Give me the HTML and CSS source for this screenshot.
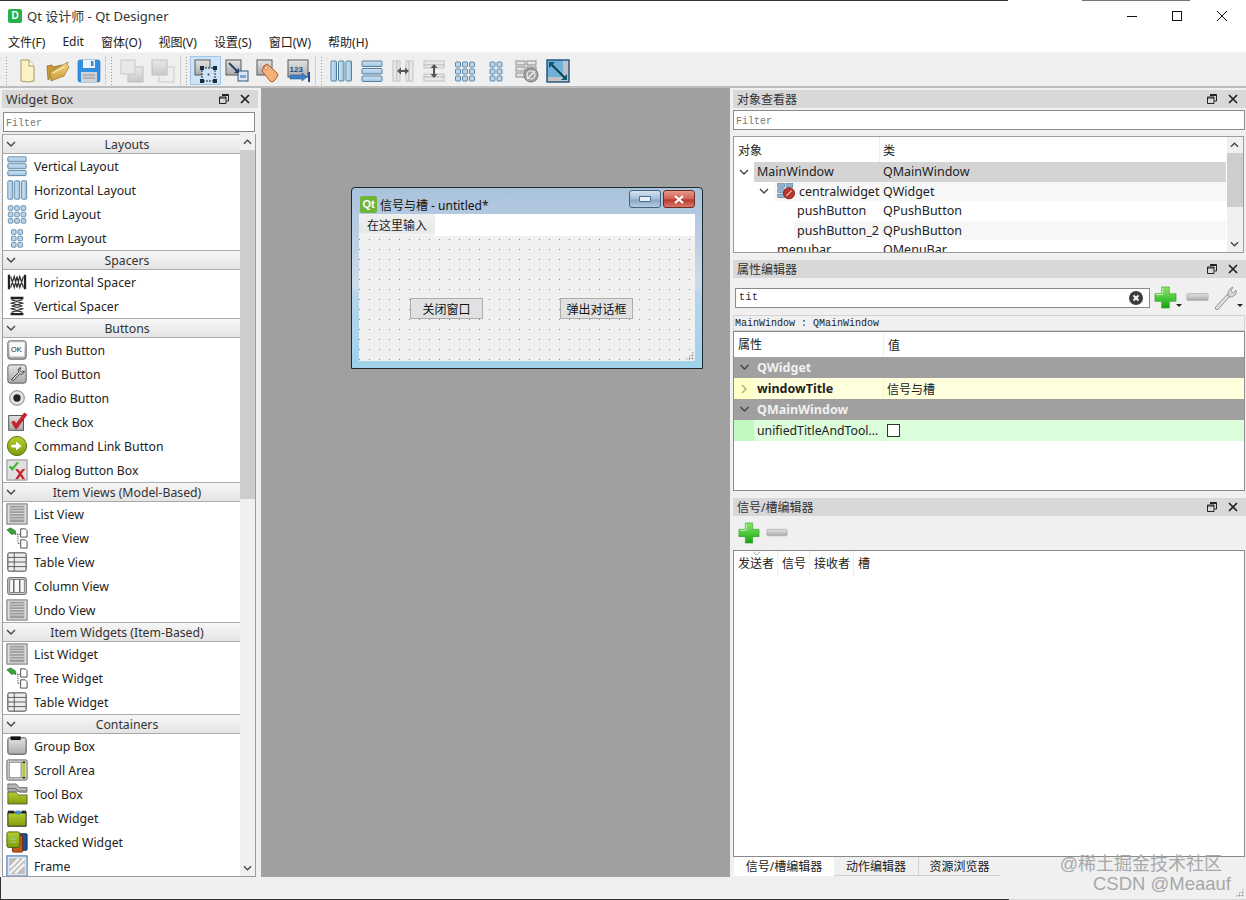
FILE: index.html
```html
<!DOCTYPE html>
<html lang="zh-CN">
<head>
    <meta charset="UTF-8">
    <title>Qt 设计师 - Qt Designer</title>
    <link rel="stylesheet" href="styles.css">
</head>
<body>
<svg class="defs" xmlns="http://www.w3.org/2000/svg">
    <defs>
        <linearGradient id="gBlue" x1="0" y1="0" x2="0" y2="1"><stop offset="0" stop-color="#d4e6f5"/><stop offset="1" stop-color="#9cc2e2"/></linearGradient>
        <linearGradient id="gBlueH" x1="0" y1="0" x2="1" y2="0"><stop offset="0" stop-color="#d4e6f5"/><stop offset="1" stop-color="#9cc2e2"/></linearGradient>
        <linearGradient id="gGray" x1="0" y1="0" x2="0" y2="1"><stop offset="0" stop-color="#e4e4e4"/><stop offset="1" stop-color="#aaa"/></linearGradient>
        <linearGradient id="gGreen" x1="0" y1="0" x2="0" y2="1"><stop offset="0" stop-color="#8be86a"/><stop offset="1" stop-color="#12a80f"/></linearGradient>
        <linearGradient id="gFolder" x1="0" y1="0" x2="0" y2="1"><stop offset="0" stop-color="#f6dc8c"/><stop offset="1" stop-color="#c99a35"/></linearGradient>
        <linearGradient id="gOlive" x1="0" y1="0" x2="0" y2="1"><stop offset="0" stop-color="#b5cf2e"/><stop offset="1" stop-color="#7f9c0e"/></linearGradient>
    </defs>
    <symbol id="i-new" viewBox="0 0 24 24"><path d="M6 1h8l5 6v15q-6 2-13 0z" fill="#fbf3c4" stroke="#a99b63"/><path d="M14 1v6h5" fill="#fff" stroke="#a99b63"/></symbol>
    <symbol id="i-open" viewBox="0 0 24 24"><path d="M2 21L1 7l5-1 1 2 9-2 1 3z" fill="#c79a3c" stroke="#8a6a22" stroke-width=".7"/><path d="M4 13L22 3l-1 3 2 2-5 9-13 5z" fill="url(#gFolder)" stroke="#94752c" stroke-width=".7"/><path d="M7 14l11-6" stroke="#fff3c4" fill="none"/></symbol>
    <symbol id="i-save" viewBox="0 0 24 24"><path d="M1 3q0-2 2-2h18q2 0 2 2v18q0 2-2 2H3q-2 0-2-2z" fill="#2f8fe0" stroke="#1c6db5" stroke-width=".6"/><rect x="6" y="1" width="12" height="8" fill="#eef4fa"/><rect x="14" y="2" width="2.500" height="5" fill="#2f8fe0"/><rect x="4" y="13" width="16" height="10" fill="#cfd4d8"/><path d="M6 16h12M6 19h12" stroke="#8b9298"/></symbol>
    <symbol id="i-fwd" viewBox="0 0 24 24" opacity=".55"><rect x="8" y="8" width="15" height="15" fill="url(#gGray)" stroke="#9a9a9a"/><rect x="1" y="1" width="14" height="14" fill="#e3e3e3" stroke="#a8a8a8"/></symbol>
    <symbol id="i-back" viewBox="0 0 24 24" opacity=".55"><rect x="8" y="8" width="15" height="15" fill="#ececec" stroke="#b0b0b0"/><rect x="1" y="1" width="15" height="15" fill="url(#gGray)" stroke="#9a9a9a"/></symbol>
    <symbol id="i-edit" viewBox="0 0 24 24"><rect x="1" y="1" width="15" height="15" fill="url(#gGray)" stroke="#5a5a5a"/><rect x="8" y="9" width="13" height="13" fill="#cfe3f6" stroke="#222" stroke-dasharray="2 1"/><path d="M6 7h4v4H6zM19 7h4v4h-4zM6 20h4v4H6zM19 20h4v4h-4z" fill="#1b2b44"/><circle cx="14.500" cy="15.500" r="1" fill="#345"/></symbol>
    <symbol id="i-signal" viewBox="0 0 24 24"><rect x="1" y="1" width="15" height="15" fill="url(#gGray)" stroke="#5a5a5a"/><rect x="13" y="12" width="10" height="10" fill="#dbe8f4" stroke="#35567a"/><rect x="15" y="16" width="6" height="3" fill="#7fa6cc"/><path d="M4 4l9 9" stroke="#22416a" stroke-width="2"/><path d="M9 14h5v-5z" fill="#22416a"/></symbol>
    <symbol id="i-buddy" viewBox="0 0 24 24"><rect x="1" y="1" width="15" height="15" fill="url(#gGray)" stroke="#5a5a5a"/><path d="M8 7l3-2 10 9q2 2 0 4l-3 4q-2 2-4 0L6 12z" fill="#f3b27a" stroke="#b5561e"/><circle cx="10" cy="9" r="1.500" fill="#fff" stroke="#b5561e" stroke-width=".6"/></symbol>
    <symbol id="i-vlayout" viewBox="0 0 24 24"><g fill="url(#gBlue)" stroke="#55819f"><rect x="2" y="2" width="20" height="5.500" rx="1"/><rect x="2" y="9.500" width="20" height="5.500" rx="1"/><rect x="2" y="17" width="20" height="5.500" rx="1"/></g></symbol>
    <symbol id="i-hlayout" viewBox="0 0 24 24"><g fill="url(#gBlueH)" stroke="#55819f"><rect x="2" y="2" width="5.500" height="20" rx="1"/><rect x="9.500" y="2" width="5.500" height="20" rx="1"/><rect x="17" y="2" width="5.500" height="20" rx="1"/></g></symbol>
    <symbol id="i-grid" viewBox="0 0 24 24"><g fill="#bcd5ea" stroke="#5f88a8"><rect x="2.500" y="3" width="5" height="5" rx="1"/><rect x="9.500" y="3" width="5" height="5" rx="1"/><rect x="16.500" y="3" width="5" height="5" rx="1"/><rect x="2.500" y="10" width="5" height="5" rx="1"/><rect x="9.500" y="10" width="5" height="5" rx="1"/><rect x="16.500" y="10" width="5" height="5" rx="1"/><rect x="2.500" y="17" width="5" height="5" rx="1"/><rect x="9.500" y="17" width="5" height="5" rx="1"/><rect x="16.500" y="17" width="5" height="5" rx="1"/></g></symbol>
    <symbol id="i-form" viewBox="0 0 24 24"><g fill="#bcd5ea" stroke="#5f88a8"><rect x="6" y="3" width="5" height="5" rx="1"/><rect x="13" y="3" width="5" height="5" rx="1"/><rect x="6" y="10" width="5" height="5" rx="1"/><rect x="13" y="10" width="5" height="5" rx="1"/><rect x="6" y="17" width="5" height="5" rx="1"/><rect x="13" y="17" width="5" height="5" rx="1"/></g></symbol>
    <symbol id="i-hsplit" viewBox="0 0 24 24"><g fill="#e8e8e8" stroke="#c2c2c2"><rect x="2" y="2" width="4" height="20"/><rect x="6" y="2" width="3" height="20"/><rect x="15" y="2" width="3" height="20"/><rect x="18" y="2" width="4" height="20"/></g><path d="M6 12l4-3.500v2.500h4V8.500l4 3.500-4 3.500V13h-4v2.500z" fill="#555"/></symbol>
    <symbol id="i-vsplit" viewBox="0 0 24 24"><g fill="#e8e8e8" stroke="#c2c2c2"><rect x="2" y="2" width="20" height="4"/><rect x="2" y="6" width="20" height="3"/><rect x="2" y="15" width="20" height="3"/><rect x="2" y="18" width="20" height="4"/></g><path d="M12 5l3.500 4H13v6h2.500L12 19l-3.500-4H11V9H8.500z" fill="#555"/></symbol>
    <symbol id="i-break" viewBox="0 0 24 24"><g fill="#e4e4e4" stroke="#8e8e8e"><rect x="1" y="2" width="9" height="4"/><rect x="12" y="2" width="9" height="4"/><rect x="1" y="8" width="9" height="4"/><rect x="12" y="8" width="9" height="4"/><rect x="1" y="14" width="9" height="4"/></g><circle cx="16" cy="16" r="7" fill="#a2a2a2" stroke="#777"/><path d="M12 20l8-8" stroke="#eee" stroke-width="1.500"/><circle cx="16" cy="16" r="4" fill="none" stroke="#eee" stroke-width="1.200"/></symbol>
    <symbol id="i-adjust" viewBox="0 0 24 24"><rect x="1" y="1" width="22" height="22" fill="#6fb0d8"/><path d="M17 1h6v22H1v-5h16z" fill="#c2c2c2"/><rect x="1" y="1" width="22" height="22" fill="none" stroke="#1d4f7c" stroke-width="1.400"/><path d="M4 4l16 16" stroke="#0d3d56" stroke-width="2"/><path d="M3 3h6L3 9zM21 21h-6l6-6z" fill="#0d5a6e"/></symbol>
    <symbol id="i-hspacer" viewBox="0 0 24 24"><path d="M2 4h2.500v16H2zM19.500 4H22v16h-2.500z" fill="#222"/><path d="M5 18L9 6l3 12 3-12 4 12M5 6l4 12 3-12 3 12 4-12" fill="none" stroke="#333" stroke-width="1.300"/></symbol>
    <symbol id="i-vspacer" viewBox="0 0 24 24"><path d="M5 2h14v2.500H5zM5 19.500h14V22H5z" fill="#222"/><path d="M18 5L6 9l12 3-12 3 12 4M6 5l12 4-12 3 12 3-12 4" fill="none" stroke="#333" stroke-width="1.300"/></symbol>
    <symbol id="i-tool" viewBox="0 0 24 24"><rect x="2" y="2" width="20" height="20" rx="2.500" fill="url(#gGray)" stroke="#555"/><path d="M6 18l8-8q-2-4 2-5l-1 3 2 2 3-1q-1 4-5 3l-7 7z" fill="#dcdcdc" stroke="#333"/></symbol>
    <symbol id="i-radio" viewBox="0 0 24 24"><circle cx="12" cy="12" r="8" fill="#e2e2e2" stroke="#777"/><circle cx="12" cy="12" r="4" fill="#222"/></symbol>
    <symbol id="i-check" viewBox="0 0 24 24"><rect x="3" y="5" width="16" height="16" fill="url(#gGray)" stroke="#444"/><path d="M6 12l3-1 2 3 9-12 3 2-11 15h-2z" fill="#cf1f2e" stroke="#8e111c" stroke-width=".5"/></symbol>
    <symbol id="i-cmdlink" viewBox="0 0 24 24"><circle cx="12" cy="12" r="10.500" fill="url(#gOlive)" stroke="#4d6b0c"/><path d="M6 10.500h5V7l6 5-6 5v-3.500H6z" fill="#fff"/></symbol>
    <symbol id="i-dialog" viewBox="0 0 24 24"><rect x="1" y="1" width="22" height="22" fill="#e0e0e0" stroke="#888"/><path d="M3 9l2-2 2 2 5-6 2 1-7 9z" fill="#45b53a"/><path d="M10 11h3l2.500 3 2.500-3h3l-4 5 4 6h-3l-2.500-3.500L13 22h-3l4-6z" fill="#d0202a"/></symbol>
    <symbol id="i-list" viewBox="0 0 24 24"><rect x="1" y="1" width="22" height="22" fill="#dcdcdc" stroke="#666"/><rect x="4" y="3" width="16" height="18" fill="#9c9c9c"/><path d="M4 5.500h16M4 8.500h16M4 11.500h16M4 14.500h16M4 17.500h16" stroke="#dedede"/></symbol>
    <symbol id="i-tree" viewBox="0 0 24 24"><path d="M1 3l4-2 5 3 1 3-5 1z" fill="#3aa23a" stroke="#1f5f1f" stroke-width=".7"/><path d="M10 8h5M13 8v10h3" fill="none" stroke="#333" stroke-dasharray="1 1"/><path d="M16 2h5l2 2v7h-7zM16 14h5l2 2v7h-7z" fill="#fff" stroke="#444"/></symbol>
    <symbol id="i-table" viewBox="0 0 24 24"><rect x="2" y="2" width="20" height="20" rx="1.500" fill="#ececec" stroke="#333"/><path d="M2 7h20M2 12h20M2 17h20M9 2v20" stroke="#555" fill="none"/></symbol>
    <symbol id="i-column" viewBox="0 0 24 24"><rect x="2" y="3" width="20" height="18" rx="1.500" fill="#f8f8f8" stroke="#333"/><path d="M8.500 5v14M15 5v14" stroke="#555" stroke-width="1.400"/><rect x="4" y="5" width="16" height="14" fill="none" stroke="#777"/></symbol>
    <symbol id="i-group" viewBox="0 0 24 24"><rect x="2" y="3" width="20" height="18" rx="2" fill="url(#gGray)" stroke="#444"/><rect x="5" y="1.500" width="11" height="4" fill="#111"/></symbol>
    <symbol id="i-scroll" viewBox="0 0 24 24"><rect x="1" y="1" width="22" height="22" rx="1.500" fill="#ddd" stroke="#555"/><rect x="3.500" y="3.500" width="13" height="17" fill="#fff" stroke="#777"/><rect x="18" y="4" width="3" height="16" fill="#b7c733"/><path d="M18 3.500h3M18 20.500h3" stroke="#222" stroke-width="1.500"/></symbol>
    <symbol id="i-toolbox" viewBox="0 0 24 24"><path d="M2 1h9l4 4h8v4H2z" fill="#b5b5b5" stroke="#444" stroke-width=".7"/><path d="M2 6h8l5 4h8" fill="none" stroke="#666"/><path d="M2 10h9l3 3h9v10H2z" fill="url(#gOlive)" stroke="#333" stroke-width=".7"/></symbol>
    <symbol id="i-tab" viewBox="0 0 24 24"><path d="M2 6h20v15H2z" fill="url(#gOlive)" stroke="#222"/><rect x="2" y="4" width="7" height="3" fill="#222"/><rect x="10" y="4" width="6" height="4" fill="#4d87c4"/><rect x="17" y="4" width="5" height="3" fill="#222"/></symbol>
    <symbol id="i-stacked" viewBox="0 0 24 24"><rect x="12" y="3" width="11" height="18" rx="1" fill="#1f4f9c" stroke="#123"/><rect x="7" y="5" width="11" height="18" rx="1" fill="#c45a1c" stroke="#6b2c08"/><rect x="1" y="1" width="14" height="17" rx="2" fill="url(#gOlive)" stroke="#4a5e08"/><path d="M5 6h6M5 9h6M5 12h6" stroke="#fff" stroke-width="1.200"/><path d="M5 6h6M5 9h6M5 12h6" stroke="#2a7d10" stroke-width=".6"/></symbol>
    <symbol id="i-frame" viewBox="0 0 24 24"><rect x="1" y="1" width="22" height="22" fill="#dfe6ee" stroke="#3f78b5" stroke-width="1.200"/><rect x="3.500" y="3.500" width="17" height="17" fill="#bdbdbd"/><path d="M4 14L14 4M4 20L20 4M10 20L20 10" stroke="#f2f2f2" stroke-width="2.500"/></symbol>
    <symbol id="i-central" viewBox="0 0 24 24"><g fill="#8fb1cf" stroke="#4d7191" stroke-width=".7"><rect x="1" y="2" width="9" height="5"/><rect x="12" y="2" width="9" height="5"/><rect x="1" y="9" width="9" height="5"/><rect x="1" y="16" width="9" height="5"/></g><circle cx="16" cy="15" r="7.500" fill="#b8362c" stroke="#7a1c15"/><path d="M12.500 18.500l7-7" stroke="#f3d0cc" stroke-width="1.500"/></symbol>
    <symbol id="i-plus" viewBox="0 0 24 24"><path d="M8 1h8v7h7v8h-7v7H8v-7H1V8h7z" fill="url(#gGreen)" stroke="#2a9a22" stroke-width=".6"/><path d="M9 2v7H2" fill="none" stroke="#c5f7b4"/></symbol>
    <symbol id="i-minus" viewBox="0 0 24 24"><rect x="1" y="8" width="22" height="7" rx="1" fill="url(#gGray)" stroke="#b5b5b5"/></symbol>
    <symbol id="i-wrench" viewBox="0 0 24 24"><path d="M3 22L15 9" stroke="#8f8f8f" stroke-width="4" stroke-linecap="round"/><path d="M3 22L15 9" stroke="#e8e8e8" stroke-width="2.200" stroke-linecap="round"/><path d="M14 10q-1-5 3-8l2-1-2 4 2 2 3-3q1 3-1 5t-5 2z" fill="#d6d6d6" stroke="#8a8a8a" stroke-width=".8"/></symbol>
    <symbol id="i-clear" viewBox="0 0 14 14"><circle cx="7" cy="7" r="7" fill="#3c3c3c"/><path d="M4.500 4.500l5 5M9.500 4.500l-5 5" stroke="#fff" stroke-width="1.800"/></symbol>
    <symbol id="i-float" viewBox="0 0 10 10"><path d="M3 .5h6.500V7H7.500M.5 3h6.500v6.500H.5zM.5 4h6.500M3 1.500h6.500" fill="none" stroke="#222"/></symbol>
    <symbol id="i-close" viewBox="0 0 10 10"><path d="M1 1l8 8M9 1l-8 8" stroke="#222" stroke-width="1.700"/></symbol>
    <symbol id="i-down" viewBox="0 0 10 6"><path d="M1 1l4 4 4-4" fill="none" stroke="#444" stroke-width="1.400"/></symbol>
    <symbol id="i-up" viewBox="0 0 10 6"><path d="M1 5l4-4 4 4" fill="none" stroke="#444" stroke-width="1.400"/></symbol>
    <symbol id="i-right" viewBox="0 0 6 10"><path d="M1 1l4 4-4 4" fill="none" stroke="#b5b070" stroke-width="1.500"/></symbol>
</svg>

<div class="topline"></div>
<header class="titlebar">
    <span class="app-icon">D</span>
    <span class="app-title">Qt 设计师 - Qt Designer</span>
    <div class="win-btns">
        <svg width="10" height="10" viewBox="0 0 10 10"><path d="M0 5.500h10" stroke="#111"/></svg>
        <svg width="10" height="10" viewBox="0 0 10 10"><rect x=".5" y=".5" width="9" height="9" fill="none" stroke="#111"/></svg>
        <svg width="10" height="10" viewBox="0 0 10 10"><path d="M0 0l10 10M10 0L0 10" stroke="#111"/></svg>
    </div>
</header>
<nav class="menubar">
    <span>文件(F)</span><span>Edit</span><span>窗体(O)</span><span>视图(V)</span><span>设置(S)</span><span>窗口(W)</span><span>帮助(H)</span>
</nav>
<div class="toolbar">
    <div class="tb-group tb-first">
        <button class="tb-btn"><svg><use href="#i-new"/></svg></button>
        <button class="tb-btn"><svg><use href="#i-open"/></svg></button>
        <button class="tb-btn"><svg><use href="#i-save"/></svg></button>
    </div>
    <div class="tb-group">
        <button class="tb-btn"><svg><use href="#i-fwd"/></svg></button>
        <button class="tb-btn"><svg><use href="#i-back"/></svg></button>
    </div>
    <div class="tb-group">
        <button class="tb-btn active"><svg><use href="#i-edit"/></svg></button>
        <button class="tb-btn"><svg><use href="#i-signal"/></svg></button>
        <button class="tb-btn"><svg><use href="#i-buddy"/></svg></button>
        <button class="tb-btn"><svg viewBox="0 0 24 24"><rect x="1" y="1" width="20" height="17" fill="url(#gGray)" stroke="#5a5a5a"/><text x="2.500" y="13" class="svg-num">123</text><path d="M3 16h12v-2l5 4-5 4v-2H3z" fill="#3f7fc4" stroke="#1e4f88" stroke-width=".5"/><path d="M22 13v10" stroke="#1e4f88" stroke-width="2"/></svg></button>
    </div>
    <div class="tb-group tb-last">
        <button class="tb-btn"><svg><use href="#i-hlayout"/></svg></button>
        <button class="tb-btn"><svg><use href="#i-vlayout"/></svg></button>
        <button class="tb-btn"><svg><use href="#i-hsplit"/></svg></button>
        <button class="tb-btn"><svg><use href="#i-vsplit"/></svg></button>
        <button class="tb-btn"><svg><use href="#i-grid"/></svg></button>
        <button class="tb-btn"><svg><use href="#i-form"/></svg></button>
        <button class="tb-btn"><svg><use href="#i-break"/></svg></button>
        <button class="tb-btn"><svg><use href="#i-adjust"/></svg></button>
    </div>
</div>

<main class="workspace">
    <aside class="left-dock">
        <div class="dock-title">
            <span>Widget Box</span>
            <svg class="d-float"><use href="#i-float"/></svg>
            <svg class="d-close"><use href="#i-close"/></svg>
        </div>
        <div class="filter">Filter</div>
        <div class="toolbox">
            <div class="tb-list">
                <div class="sec"><svg class="chev"><use href="#i-down"/></svg><span>Layouts</span></div>
                <div class="item"><svg><use href="#i-vlayout"/></svg>Vertical Layout</div>
                <div class="item"><svg><use href="#i-hlayout"/></svg>Horizontal Layout</div>
                <div class="item"><svg><use href="#i-grid"/></svg>Grid Layout</div>
                <div class="item"><svg><use href="#i-form"/></svg>Form Layout</div>
                <div class="sec"><svg class="chev"><use href="#i-down"/></svg><span>Spacers</span></div>
                <div class="item"><svg><use href="#i-hspacer"/></svg>Horizontal Spacer</div>
                <div class="item"><svg><use href="#i-vspacer"/></svg>Vertical Spacer</div>
                <div class="sec"><svg class="chev"><use href="#i-down"/></svg><span>Buttons</span></div>
                <div class="item"><svg viewBox="0 0 24 24"><rect x="2" y="2" width="20" height="20" rx="2.500" fill="url(#gGray)" stroke="#555"/><rect x="4" y="4" width="16" height="15" fill="#fafafa"/><text x="5.500" y="14.500" class="svg-ok">OK</text></svg>Push Button</div>
                <div class="item"><svg><use href="#i-tool"/></svg>Tool Button</div>
                <div class="item"><svg><use href="#i-radio"/></svg>Radio Button</div>
                <div class="item"><svg><use href="#i-check"/></svg>Check Box</div>
                <div class="item"><svg><use href="#i-cmdlink"/></svg>Command Link Button</div>
                <div class="item"><svg><use href="#i-dialog"/></svg>Dialog Button Box</div>
                <div class="sec"><svg class="chev"><use href="#i-down"/></svg><span>Item Views (Model-Based)</span></div>
                <div class="item"><svg><use href="#i-list"/></svg>List View</div>
                <div class="item"><svg><use href="#i-tree"/></svg>Tree View</div>
                <div class="item"><svg><use href="#i-table"/></svg>Table View</div>
                <div class="item"><svg><use href="#i-column"/></svg>Column View</div>
                <div class="item"><svg><use href="#i-list"/></svg>Undo View</div>
                <div class="sec"><svg class="chev"><use href="#i-down"/></svg><span>Item Widgets (Item-Based)</span></div>
                <div class="item"><svg><use href="#i-list"/></svg>List Widget</div>
                <div class="item"><svg><use href="#i-tree"/></svg>Tree Widget</div>
                <div class="item"><svg><use href="#i-table"/></svg>Table Widget</div>
                <div class="sec"><svg class="chev"><use href="#i-down"/></svg><span>Containers</span></div>
                <div class="item"><svg><use href="#i-group"/></svg>Group Box</div>
                <div class="item"><svg><use href="#i-scroll"/></svg>Scroll Area</div>
                <div class="item"><svg><use href="#i-toolbox"/></svg>Tool Box</div>
                <div class="item"><svg><use href="#i-tab"/></svg>Tab Widget</div>
                <div class="item"><svg><use href="#i-stacked"/></svg>Stacked Widget</div>
                <div class="item"><svg><use href="#i-frame"/></svg>Frame</div>
            </div>
            <div class="vscroll left-scroll">
                <svg class="arrow"><use href="#i-up"/></svg>
                <div class="track"><div class="thumb"></div></div>
                <svg class="arrow"><use href="#i-down"/></svg>
            </div>
        </div>
    </aside>

    <section class="mdi">
        <div class="form-win">
            <div class="form-title">
                <span class="qt-icon">Qt</span>
                <span class="form-name">信号与槽 - untitled*</span>
                <span class="aero-btn aero-min"></span>
                <span class="aero-btn aero-close"><svg width="12" height="9" viewBox="0 0 12 9"><path d="M2 1l8 7M10 1L2 8" stroke="#fff" stroke-width="2.200"/></svg></span>
            </div>
            <div class="form-menu"><span>在这里输入</span></div>
            <div class="form-body">
                <div class="form-btn btn-close">关闭窗口</div>
                <div class="form-btn btn-dialog">弹出对话框</div>
                <div class="grip"></div>
            </div>
        </div>
    </section>

    <aside class="right-dock">
        <div class="dock-title">
            <span>对象查看器</span>
            <svg class="d-float"><use href="#i-float"/></svg>
            <svg class="d-close"><use href="#i-close"/></svg>
        </div>
        <div class="filter">Filter</div>
        <div class="obj-tree">
            <div class="tree-rows">
                <div class="t-row t-head"><div class="t-c1">对象</div><div class="t-c2">类</div></div>
                <div class="t-row"><div class="t-c1 sel"><svg class="tw tw1"><use href="#i-down"/></svg><span class="name n0">MainWindow</span></div><div class="t-c2 sel">QMainWindow</div></div>
                <div class="t-row"><div class="t-c1 alt2"><svg class="tw tw2"><use href="#i-down"/></svg><svg class="cw"><use href="#i-central"/></svg><span>centralwidget</span></div><div class="t-c2 alt">QWidget</div></div>
                <div class="t-row"><div class="t-c1"><span class="name n2">pushButton</span></div><div class="t-c2">QPushButton</div></div>
                <div class="t-row"><div class="t-c1 alt3"><span class="name n2b">pushButton_2</span></div><div class="t-c2 alt">QPushButton</div></div>
                <div class="t-row"><div class="t-c1"><span class="name n1">menubar</span></div><div class="t-c2">QMenuBar</div></div>
            </div>
            <div class="vscroll tree-scroll">
                <svg class="arrow"><use href="#i-up"/></svg>
                <div class="track"><div class="thumb"></div></div>
                <svg class="arrow"><use href="#i-down"/></svg>
            </div>
        </div>

        <div class="dock-title dock-gap">
            <span>属性编辑器</span>
            <svg class="d-float"><use href="#i-float"/></svg>
            <svg class="d-close"><use href="#i-close"/></svg>
        </div>
        <div class="prop-tools">
            <div class="prop-input"><span>tit</span><svg class="clear"><use href="#i-clear"/></svg></div>
            <svg class="plus"><use href="#i-plus"/></svg><i class="drop"></i>
            <svg class="minus"><use href="#i-minus"/></svg>
            <svg class="wrench"><use href="#i-wrench"/></svg><i class="drop"></i>
        </div>
        <div class="class-label">MainWindow : QMainWindow</div>
        <div class="prop-table">
            <div class="p-head"><div class="p-c1">属性</div><div class="p-c2">值</div></div>
            <div class="p-group"><svg class="tw"><use href="#i-down"/></svg>QWidget</div>
            <div class="p-row p-yellow"><div class="p-strip"><svg class="tr"><use href="#i-right"/></svg></div><div class="p-name"><b>windowTitle</b></div><div class="p-val">信号与槽</div></div>
            <div class="p-group"><svg class="tw"><use href="#i-down"/></svg>QMainWindow</div>
            <div class="p-row p-green"><div class="p-strip"></div><div class="p-name">unifiedTitleAndTool...</div><div class="p-val"><span class="p-check"></span></div></div>
        </div>

        <div class="dock-title dock-gap">
            <span>信号/槽编辑器</span>
            <svg class="d-float"><use href="#i-float"/></svg>
            <svg class="d-close"><use href="#i-close"/></svg>
        </div>
        <div class="sig-tools">
            <svg class="plus"><use href="#i-plus"/></svg>
            <svg class="minus"><use href="#i-minus"/></svg>
        </div>
        <div class="sig-table">
            <div class="sig-head">
                <svg class="sort" viewBox="0 0 10 6"><path d="M1 1l4 4 4-4" fill="none" stroke="#888"/></svg>
                <span class="w1">发送者</span><span class="w2">信号</span><span class="w3">接收者</span><span class="w4">槽</span>
            </div>
        </div>
        <div class="tabs">
            <span class="tab active">信号/槽编辑器</span><span class="tab t2">动作编辑器</span><span class="tab t3">资源浏览器</span>
        </div>
    </aside>
</main>

<footer class="statusbar"><div class="grip status-grip"></div></footer>
<div class="watermark"><div class="wm1">@稀土掘金技术社区</div><div class="wm2">CSDN @Meaauf</div></div>
</body>
</html>
```

FILE: styles.css
```css
* {
    margin: 0;
    padding: 0;
    box-sizing: border-box;
}

html, body {
    width: 1246px;
    height: 900px;
    overflow: hidden;
}

body {
    position: relative;
    display: flex;
    flex-direction: column;
    background: #f0f0f0;
    color: #222;
    font-family: "Noto Sans", "Noto Sans CJK SC", sans-serif;
    font-size: 12.5px;
}

.defs {
    position: absolute;
    width: 0;
    height: 0;
}

.svg-num {
    font: bold 8px "Liberation Sans", sans-serif;
    fill: #1e4f88;
}

.svg-ok {
    font: 8px "Liberation Sans", sans-serif;
    fill: #222;
}

.topline {
    height: 1px;
    background: linear-gradient(to right, #333 1008px, #fff 1008px, #fff 1082px, #777 1082px, #777 1190px, #fff 1190px);
}

.titlebar {
    height: 29px;
    background: #fff;
    display: flex;
    align-items: center;
    padding-left: 8px;
}

.app-icon {
    width: 14px;
    height: 14px;
    border-radius: 2px;
    background: #27b14a;
    color: #fff;
    font: bold 10px/14px "Liberation Sans", sans-serif;
    text-align: center;
    margin-right: 5px;
}

.app-title {
    font-size: 13px;
    color: #333;
}

.win-btns {
    margin-left: auto;
    display: flex;
    gap: 35px;
    padding-right: 19px;
}

.menubar {
    height: 23px;
    background: #fff;
    display: flex;
    align-items: center;
    padding: 1px 0 0 8px;
    gap: 17px;
    font-size: 12px;
    border-bottom: 1px solid #f4f4f4;
}

.toolbar {
    height: 35px;
    display: flex;
    background: #efefef;
    border-bottom: 2px solid #bdbdbd;
    padding-top: 3px;
}

.tb-group {
    display: flex;
    height: 29px;
    padding-left: 10px;
    padding-right: 2px;
    border-right: 1px solid #cfcfcf;
    background-image: radial-gradient(#999 0.8px, transparent 1px);
    background-size: 3px 3px;
    background-repeat: repeat-y;
    background-position: 4px 0;
}

.tb-first { width: 106px; padding-left: 11px; background-position: 5px 0; }
.tb-group:nth-child(2) { width: 75px; padding-left: 10px; }
.tb-group:nth-child(3) { width: 135px; padding-left: 9px; }
.tb-last { border-right: none; padding-left: 9px; }

.tb-btn {
    width: 31px;
    height: 29px;
    flex: none;
    border: 1px solid transparent;
    background: none;
    display: flex;
    align-items: center;
    justify-content: center;
}

.tb-btn svg {
    width: 24px;
    height: 24px;
}

.tb-btn.active {
    background: #cde4f7;
    border-color: #a4c6e4;
}

.workspace {
    flex: 1;
    min-height: 0;
    display: flex;
}

.left-dock {
    width: 258px;
    padding-left: 2px;
    padding-top: 2px;
    display: flex;
    flex-direction: column;
    flex: none;
}

.dock-title {
    height: 18px;
    flex: none;
    background: #d8d8d8;
    display: flex;
    align-items: center;
    padding-left: 4px;
    font-size: 12px;
    color: #333;
}

.left-dock .dock-title span { font-size: 12.5px; }

.d-float {
    width: 10px;
    height: 10px;
    margin-left: auto;
}

.d-close {
    width: 10px;
    height: 10px;
    margin-left: 11px;
    margin-right: 8px;
}

.filter {
    height: 20px;
    flex: none;
    border: 1px solid #8a8a8a;
    background: #fff;
    font: 10px/18px "Liberation Mono", monospace;
    color: #777;
    padding: 2px 0 0 2px;
}

.left-dock .filter {
    margin: 4px 3px 2px 1px;
}

.toolbox {
    flex: 1;
    min-height: 0;
    width: 254px;
    display: flex;
    background: #fff;
    border: 1px solid #9c9c9c;
    border-top: none;
    font-size: 12.25px;
}

.tb-list {
    width: 237px;
    overflow: hidden;
}

.sec {
    height: 20px;
    display: flex;
    align-items: center;
    background: linear-gradient(#f6f6f6, #e4e4e4);
    border-top: 1px solid #aaa;
    border-bottom: 1px solid #aaa;
    color: #333;
}

.chev {
    width: 10px;
    height: 6px;
    margin-left: 3px;
    margin-right: -2px;
    flex: none;
}

.sec span {
    flex: 1;
    text-align: center;
}

.item {
    height: 24px;
    display: flex;
    align-items: center;
    gap: 6px;
    padding-left: 3px;
}

.item svg {
    width: 22px;
    height: 22px;
    flex: none;
}

.vscroll {
    display: flex;
    flex-direction: column;
    background: #f0f0f0;
}

.left-scroll { width: 15px; }

.arrow {
    width: 15px;
    height: 16px;
    flex: none;
    padding: 5px 3px;
}

.track {
    flex: 1;
    min-height: 0;
}

.left-scroll .thumb {
    height: 349px;
    background: #cdcdcd;
}

.mdi {
    position: relative;
    width: 469px;
    margin-left: 3px;
    flex: none;
    background: #a0a0a0;
}

.form-win {
    position: absolute;
    left: 90px;
    top: 99px;
    width: 352px;
    height: 182px;
    border: 1px solid #1e2a30;
    border-radius: 4px 4px 0 0;
    background: linear-gradient(#a9c2dc, #cddcea 55%, #b8d5ec 58%, #9fd2ea);
    padding: 0 7px 7px;
    display: flex;
    flex-direction: column;
}

.form-title {
    height: 26px;
    flex: none;
    display: flex;
    align-items: center;
    font-size: 12px;
    color: #111;
}

.qt-icon {
    width: 17px;
    height: 17px;
    margin-left: 1px;
    margin-top: 7px;
    background: #6eb53a;
    color: #fff;
    font: bold 11px/16px "Liberation Sans", sans-serif;
    text-align: center;
    border-radius: 2px;
}

.form-name {
    margin-left: 3px;
    margin-top: 8px;
}

.aero-btn {
    width: 32px;
    height: 18px;
    border: 1px solid #48617d;
    border-radius: 3px;
    margin-top: -4px;
    display: flex;
    align-items: center;
    justify-content: center;
}

.aero-min {
    margin-left: auto;
    margin-right: 2px;
    background: linear-gradient(#d4e2f0, #a5bdd7 50%, #8aa6c6 55%, #b4cce2);
}

.aero-min::after {
    content: "";
    width: 10px;
    height: 4px;
    background: #e8eef5;
    border: 1px solid #4c6a8c;
    border-radius: 1px;
}

.aero-close {
    background: linear-gradient(#e69a8c, #d06050 50%, #b73a2c 55%, #d9786a);
    border-color: #6e2a22;
}

.form-menu {
    height: 22px;
    flex: none;
    background: #fff;
    font-size: 12px;
}

.form-menu span {
    display: block;
    width: 76px;
    height: 22px;
    line-height: 24px;
    text-align: center;
    background: linear-gradient(#f0f0f0, #e8e8e8 80%, #f6f6f6);
}

.form-body {
    position: relative;
    flex: 1;
    background-color: #f0f0f0;
    background-image: conic-gradient(at 1px 1px, transparent 75%, #8a8a8a 0);
    background-size: 10px 10px;
    background-position: 0 3px;
}

.form-btn {
    position: absolute;
    top: 62px;
    width: 73px;
    height: 21px;
    background: #e1e1e1;
    border: 1px solid #adadad;
    text-align: center;
    line-height: 21px;
    font-size: 12px;
    color: #111;
}

.btn-close { left: 51px; }
.btn-dialog { left: 201px; }

.grip {
    position: absolute;
    right: 1px;
    bottom: 1px;
    width: 9px;
    height: 9px;
    background-image: radial-gradient(#999 0.9px, transparent 1.100px);
    background-size: 3px 3px;
    clip-path: polygon(100% 0, 100% 100%, 0 100%);
}

.right-dock {
    width: 513px;
    margin-left: 3px;
    padding-top: 2px;
    display: flex;
    flex-direction: column;
    flex: none;
}

.right-dock .filter {
    margin: 2px 1px 0 0;
}

.obj-tree {
    height: 117px;
    margin: 6px 2px 0 0;
    flex: none;
    display: flex;
    background: #fff;
    border: 1px solid #9c9c9c;
    overflow: hidden;
}

.tree-rows {
    width: 494px;
    overflow: hidden;
}

.t-row {
    height: 19.500px;
    display: flex;
    align-items: stretch;
}

.t-head {
    height: 25px;
    align-items: center;
    font-size: 12px;
}

.t-c1 {
    position: relative;
    width: 146px;
    flex: none;
    display: flex;
    align-items: center;
    white-space: nowrap;
}

.t-c2 {
    flex: 1;
    padding-left: 3px;
    display: flex;
    align-items: center;
}

.t-head .t-c1 { padding-left: 4px; height: 25px; border-right: 1px solid #eee; }
.t-head .t-c2 { height: 25px; }

.t-c1.sel { background: linear-gradient(to right, #fff 20px, #d4d4d4 20px); }
.t-c2.sel { background: #d4d4d4; }
.alt { background: #f7f7f7; }
.t-c1.alt2 { background: linear-gradient(to right, #fff 40px, #f7f7f7 40px); }
.t-c1.alt3 { background: linear-gradient(to right, #fff 60px, #f7f7f7 60px); }

.tw {
    width: 10px;
    height: 6px;
    flex: none;
}

.tw1 { margin-left: 5px; }
.tw2 { margin-left: 25px; }

.cw {
    width: 18px;
    height: 18px;
    margin-left: 8px;
    margin-right: 4px;
    flex: none;
}

.n0 { margin-left: 8px; }
.n1 { margin-left: 43px; }
.n2, .n2b { margin-left: 63px; }

.tree-scroll {
    width: 16px;
    flex: none;
    margin-left: 1px;
}

.tree-scroll .thumb {
    height: 54px;
    background: #cdcdcd;
}

.dock-gap {
    margin-top: 7px;
}

.prop-tools {
    height: 36px;
    flex: none;
    display: flex;
    align-items: center;
    padding-left: 2px;
    padding-top: 3px;
}

.prop-input {
    width: 415px;
    height: 20px;
    border: 1px solid #8a8a8a;
    background: #fff;
    display: flex;
    align-items: center;
    justify-content: space-between;
    padding: 0 6px 0 3px;
    font: 10px "Liberation Mono", monospace;
    letter-spacing: .5px;
}

.clear {
    width: 14px;
    height: 14px;
}

.plus {
    width: 23px;
    height: 23px;
    flex: none;
}

.prop-tools .plus { margin-left: 4px; }

.drop {
    width: 0;
    height: 0;
    border: 3px solid transparent;
    border-top-color: #222;
    border-bottom: none;
    margin: 16px 0 0 -1px;
}

.minus {
    width: 23px;
    height: 23px;
    flex: none;
}

.prop-tools .minus { margin-left: 4px; }

.wrench {
    width: 24px;
    height: 24px;
    margin-left: 5px;
    flex: none;
}

.class-label {
    height: 16px;
    flex: none;
    margin: 1px 1px 0 0;
    padding-left: 1px;
    background: #f0f0f0;
    border: 1px solid #d4d4d4;
    font: 10px/15px "Liberation Mono", monospace;
    color: #222;
    white-space: pre;
}

.prop-table {
    height: 160px;
    flex: none;
    margin: 0 1px 0 0;
    border: 1px solid #8a8a8a;
    background: #fff;
}

.p-head {
    height: 25px;
    display: flex;
    align-items: center;
    font-size: 12px;
}

.p-c1 {
    width: 150px;
    height: 25px;
    line-height: 25px;
    padding-left: 4px;
    border-right: 1px solid #eee;
}

.p-c2 { padding-left: 4px; }

.p-group {
    height: 21px;
    background: #a0a0a0;
    color: #f0f0f0;
    font-weight: 700;
    display: flex;
    align-items: center;
}

.p-group .tw {
    margin-left: 5px;
    margin-right: 7px;
    width: 11px;
    margin-top: -2px;
}

.p-row {
    height: 21px;
    display: flex;
    align-items: stretch;
}

.p-strip {
    width: 20px;
    flex: none;
    display: flex;
    align-items: center;
    justify-content: center;
}

.p-name {
    width: 130px;
    flex: none;
    padding-left: 3px;
    line-height: 21px;
    border-right: 1px solid #eee;
    white-space: nowrap;
    font-size: 12.25px;
}

.p-name b { font-size: 12.5px; }

.p-val {
    padding-left: 3px;
    display: flex;
    align-items: center;
    font-size: 12px;
}

.tr {
    width: 6px;
    height: 10px;
}

.p-yellow { background: #ffffdc; }
.p-yellow .p-strip { background: #ffffc8; }
.p-green { background: #dcfddc; }
.p-green .p-strip { background: #c0f8c0; }

.p-check {
    width: 13px;
    height: 13px;
    background: #fff;
    border: 1px solid #333;
}

.sig-tools {
    height: 34px;
    flex: none;
    display: flex;
    align-items: center;
    padding-left: 5px;
    gap: 6px;
}

.sig-tools .plus {
    width: 22px;
    height: 22px;
}

.sig-tools .minus {
    width: 22px;
    height: 22px;
}

.sig-table {
    height: 307px;
    flex: none;
    margin-right: 1px;
    border: 1px solid #8a8a8a;
    background: #fff;
}

.sig-head {
    position: relative;
    height: 25px;
    display: flex;
    font-size: 12px;
    line-height: 25px;
}

.sig-head span {
    padding-left: 4px;
    border-right: 1px solid #eee;
}

.w1 { width: 44px; }
.w2 { width: 32px; }
.w3 { width: 44px; }
.sig-head .w4 { border-right: none; }

.sort {
    position: absolute;
    left: 18px;
    top: 0;
    width: 9px;
    height: 5px;
}

.tabs {
    height: 19px;
    flex: none;
    display: flex;
    font-size: 12px;
}

.tab {
    line-height: 19px;
    height: 19px;
    color: #222;
}

.tab.active {
    width: 100px;
    margin-left: 1px;
    background: #fff;
    text-align: center;
}

.t2 {
    width: 85px;
    text-align: center;
    border-right: 1px solid #d0d0d0;
    border-bottom: 1px solid #d0d0d0;
}

.t3 {
    width: 81px;
    text-align: center;
    border-bottom: 1px solid #d0d0d0;
}

.statusbar {
    position: relative;
    height: 23px;
    flex: none;
    border-left: 1px solid #444;
    border-bottom: 1px solid;
    border-image: linear-gradient(to right, #333 1008px, #d8d8d8 1008px) 1;
}

.status-grip {
    right: 2px;
    bottom: 2px;
}

.watermark {
    position: absolute;
    right: 15px;
    top: 855px;
    text-align: right;
    color: #a8a8a8;
    font-size: 18px;
    line-height: 19px;
    font-family: "Liberation Sans", "Noto Sans CJK SC", sans-serif;
}

.wm1 { padding-right: 9px; }
.wm2 { font-size: 18.500px; }
```
